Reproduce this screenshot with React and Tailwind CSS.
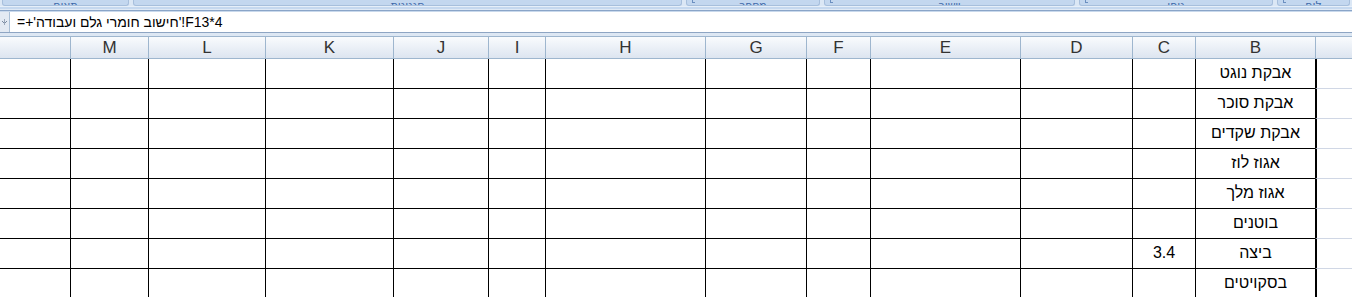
import React from "react";

const cols = [
  { id: "N", w: 70, label: "" },
  { id: "M", w: 78, label: "M" },
  { id: "L", w: 117, label: "L" },
  { id: "K", w: 128, label: "K" },
  { id: "J", w: 95, label: "J" },
  { id: "I", w: 57, label: "I" },
  { id: "H", w: 160, label: "H" },
  { id: "G", w: 101, label: "G" },
  { id: "F", w: 64, label: "F" },
  { id: "E", w: 150, label: "E" },
  { id: "D", w: 112, label: "D" },
  { id: "C", w: 63, label: "C" },
  { id: "B", w: 120, label: "B" },
  { id: "A", w: 37, label: "" },
];

const rows = [
  { B: "אבקת נוגט" },
  { B: "אבקת סוכר" },
  { B: "אבקת שקדים" },
  { B: "אגוז לוז" },
  { B: "אגוז מלך" },
  { B: "בוטנים" },
  { B: "ביצה", C: "3.4" },
  { B: "בסקויטים" },
];

const groups = [
  { w: 131, label: "תאים", launcher: false },
  { w: 553, label: "סגנונות", launcher: false },
  { w: 138, label: "מספר", launcher: true },
  { w: 255, label: "יישור", launcher: true },
  { w: 198, label: "גופן", launcher: true },
  { w: 77, label: "לוח", launcher: true },
];

function RibbonGroups() {
  return (
    <div className="flex h-[6px] bg-[#dbe7f5]">
      {groups.map((g, i) => (
        <div
          key={i}
          style={{ width: g.w }}
          className="relative h-[6px] shrink-0 overflow-hidden px-[2px]"
        >
          <div className="relative flex h-[6px] items-end justify-center overflow-hidden rounded-b-[3px] border-x border-b border-[#a7bfdc] bg-[#c3d7ef]">
            <span className="mb-[-6px] text-[11px] leading-[11px] text-[#3e6aaa] [font-family:'DejaVu_Sans',sans-serif]">
              {g.label}
            </span>
            {g.launcher && (
              <span className="absolute left-[5px] top-0 h-[3px] w-[3px] border-b border-l border-[#6b8fc0]" />
            )}
          </div>
        </div>
      ))}
    </div>
  );
}

export default function App() {
  return (
    <div className="h-[297px] w-[1352px] overflow-hidden bg-white [font-family:'Liberation_Sans',Arial,sans-serif]">
      {/* ribbon bottom */}
      <RibbonGroups />
      <div className="h-[1px] bg-[#e6eff9]" />
      <div className="h-[2px] bg-[#c5d8ef]" />
      <div className="h-[1px] bg-[#dfe9f5]" />
      <div className="h-[1px] bg-[#8aa5c8]" />
      <div className="h-[1px] bg-[#c9d9ec]" />

      {/* formula bar */}
      <div className="flex h-[20px] bg-white">
        <div className="flex w-[10px] shrink-0 items-center justify-center border-r border-[#a9bfd6] bg-[#e3eaf3]">
          <svg width="7" height="7" viewBox="0 0 7 7">
            <path d="M1 2 L3.5 4.5 L6 2" fill="none" stroke="#7a8aa0" strokeWidth="1" />
            <path d="M3.5 0 V6" stroke="#9aa8ba" strokeWidth="1" />
          </svg>
        </div>
        <div className="flex flex-1 items-center pl-[7px] text-[14px] leading-[20px] text-black" dir="ltr">
          {"=+'חישוב חומרי גלם ועבודה'!F13*4"}
        </div>
      </div>
      <div className="h-[1px] bg-[#8ea5c3]" />
      <div className="h-[3px] bg-[#dde7f3]" />

      {/* column headers */}
      <div className="flex h-[23px] border-y border-[#9eb6ce] bg-gradient-to-b from-[#f9fbfd] to-[#dde5f0]">
        {cols.map((c, i) => (
          <div
            key={c.id}
            style={{ width: c.w }}
            className={
              "flex shrink-0 items-center justify-center text-[17px] text-[#333] " +
              (i > 0 ? "border-l border-[#9eb6ce]" : "")
            }
          >
            {c.label}
          </div>
        ))}
      </div>

      {/* grid */}
      {rows.map((r, ri) => (
        <div key={ri} className="flex h-[30px]">
          {cols.map((c, i) => {
            const isA = c.id === "A";
            const cls =
              "flex shrink-0 items-end justify-center pb-[6px] text-[16px] leading-[18px] text-black " +
              (isA
                ? "border-l-2 border-l-black border-b border-b-[#d0d7e5]"
                : "border-b border-b-black " + (i > 0 ? "border-l border-l-black" : ""));
            return (
              <div key={c.id} style={{ width: c.w }} className={cls}>
                {r[c.id] || ""}
              </div>
            );
          })}
        </div>
      ))}
    </div>
  );
}
